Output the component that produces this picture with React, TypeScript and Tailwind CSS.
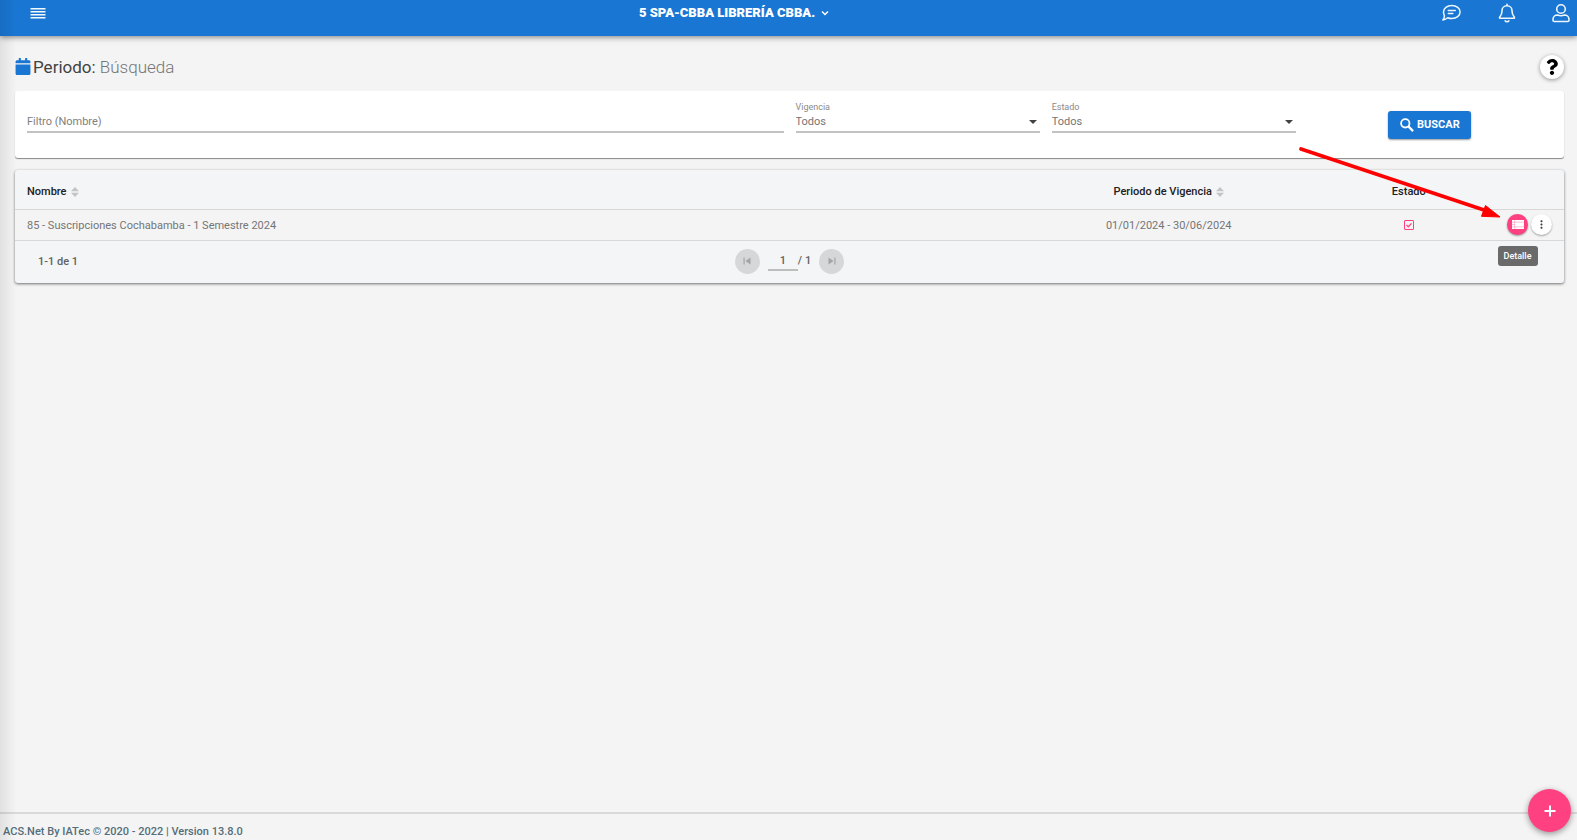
import { useState } from "react";
import { FaCalendar, FaQuestion } from "react-icons/fa";
import { MdMoreVert, MdSkipNext, MdSkipPrevious } from "react-icons/md";

interface Period {
  id: number;
  name: string;
  range: string;
  active: boolean;
}

const periods: Period[] = [
  {
    id: 85,
    name: "85 - Suscripciones Cochabamba - 1 Semestre 2024",
    range: "01/01/2024 - 30/06/2024",
    active: true,
  },
];

const SortIcon = () => (
  <svg viewBox="0 0 8 10" className="h-[10px] w-2 fill-[#c4c4c4]" aria-hidden="true">
    <path d="M4 0L8 4.3H0zM0 5.7h8L4 10z" />
  </svg>
);

const TopBar = () => (
  <header className="relative z-10 h-9 bg-[#1976d2] pr-[7px] pl-[30px] text-white shadow-[0_1px_6px_rgba(0,0,0,0.5)]">
    <div className="flex h-[26px] items-center">
      <button aria-label="Menú">
        <svg viewBox="0 0 16 12" className="h-3 w-4 fill-[#f4f9fe]">
          <path d="M0.500 1h15v1.500h-15zM0.500 4h15v1.500h-15zM0.500 7h15v1.500h-15zM0.500 10h15v1.500h-15z" />
        </svg>
      </button>
      <div className="flex flex-1 justify-center">
        <button className="flex items-center gap-1 text-[13px] font-black">
          5 SPA-CBBA LIBRERÍA CBBA.
          <svg viewBox="0 0 12 12" className="h-3 w-3 fill-none stroke-white stroke-[1.5]">
            <path d="M3 4.5l3 3 3-3" />
          </svg>
        </button>
      </div>
      <div className="flex items-center gap-9 pl-[18px]">
        <button aria-label="Mensajes">
          <svg viewBox="0 0 20 18" className="h-[18px] w-5 fill-none stroke-[#eef5fc] stroke-[1.5]" strokeLinecap="round" strokeLinejoin="round">
            <path d="M9.800 1.500c4.700 0 8.300 2.900 8.300 6.500s-3.600 6.500-8.300 6.500c-1.500 0-2.900-.3-4.100-.8C4.300 14.900 2.500 16 .8 16c.9-1 1.500-2.600 1.700-4.200C1.800 10.700 1.500 9.400 1.500 8c0-3.600 3.600-6.500 8.300-6.500z" />
            <path d="M6.300 6.500h7M6.300 9.500h4.500" />
          </svg>
        </button>
        <button aria-label="Notificaciones">
          <svg viewBox="0 0 18 20" className="h-5 w-[18px] fill-none stroke-[#eef5fc] stroke-[1.6]" strokeLinecap="round" strokeLinejoin="round">
            <path d="M9 1.300v1.500M9 2.800c-3 0-5 2.200-5 5 0 4-1.200 5-2.300 6.200-.4.500-.1 1.300.6 1.300h13.400c.7 0 1-.8.6-1.300C15.200 12.800 14 11.800 14 7.800c0-2.800-2-5-5-5z" />
            <path d="M7.200 17.800c.3.600 1 .9 1.800.9s1.500-.3 1.800-.9" />
          </svg>
        </button>
        <button aria-label="Usuario">
          <svg viewBox="0 0 18 20" className="h-5 w-[18px] fill-none stroke-[#eef5fc] stroke-[1.6]" strokeLinejoin="round">
            <circle cx="9" cy="6" r="4.300" />
            <path d="M5.500 12c1.200.5 2.300.7 3.500.7s2.300-.2 3.500-.7c2.600 0 4.500 1.900 4.500 4.400v.8c0 .8-.6 1.300-1.300 1.300H2.300c-.7 0-1.300-.5-1.300-1.300v-.8C1 13.900 2.900 12 5.500 12z" />
          </svg>
        </button>
      </div>
    </div>
  </header>
);

const SelectField = ({ id, label }: { id: string; label: string }) => (
  <div className="relative flex h-8 flex-col border-b-2 border-[#c2c2c2]">
    <label htmlFor={id} className="h-3 text-[9px] leading-3 text-[#8a8a8a]">
      {label}
    </label>
    <select id={id} className="h-[18px] w-full appearance-none text-[11px] leading-[14px] text-[#757575] outline-none">
      <option>Todos</option>
      <option>Activo</option>
      <option>Inactivo</option>
    </select>
    <svg viewBox="0 0 8 4" className="pointer-events-none absolute right-[3px] bottom-[7px] h-1 w-2 fill-[#424242]" aria-hidden="true">
      <path d="M0 0h8L4 4z" />
    </svg>
  </div>
);

const Filters = () => {
  const [filter, setFilter] = useState("");

  return (
    <form
      onSubmit={(e) => e.preventDefault()}
      className="grid h-[67px] grid-cols-6 items-start gap-3 rounded-[3px] bg-white px-3 pt-[10px] shadow-[0_1px_1px_rgba(0,0,0,0.45)]"
    >
      <div className="col-span-3 flex h-8 flex-col justify-end border-b-2 border-[#c2c2c2]">
        <input
          aria-label="Filtro (Nombre)"
          placeholder="Filtro (Nombre)"
          value={filter}
          onChange={(e) => setFilter(e.target.value)}
          className="h-[18px] w-full pb-[2px] text-[11px] leading-[14px] outline-none placeholder:text-[#808080]"
        />
      </div>
      <SelectField id="vigencia" label="Vigencia" />
      <SelectField id="estado" label="Estado" />
      <button className="mt-[10px] flex h-7 w-[83px] items-center justify-center gap-[3px] justify-self-center rounded-[3px] bg-[#1976d2] text-[11px] font-bold text-white shadow-[0_1px_2px_rgba(0,0,0,0.4)]">
        <svg viewBox="0 0 14 14" className="h-[14px] w-[14px] fill-none stroke-white stroke-[1.8]" aria-hidden="true">
          <circle cx="5.300" cy="5.300" r="4.200" />
          <path d="M8.400 8.400l4.700 4.700" strokeWidth="2.200" />
        </svg>
        BUSCAR
      </button>
    </form>
  );
};

const PeriodTable = () => (
  <section className="relative rounded-[3px] bg-[#f4f5f7] text-[11px] shadow-[0_1px_3px_rgba(0,0,0,0.55)]">
    <table className="w-full table-fixed border-collapse">
      <thead className="text-[#212121]">
        <tr className="h-[39px] border-b border-[#d8d8d8]">
          <th className="pt-[6px] pr-3 pl-3 text-left font-medium">
            <button className="flex items-center gap-1">
              Nombre <SortIcon />
            </button>
          </th>
          <th className="w-[20%] pt-[6px] font-medium">
            <button className="inline-flex items-center gap-1">
              Periodo de Vigencia <SortIcon />
            </button>
          </th>
          <th className="w-[11%] pt-[6px] font-medium">Estado</th>
          <th className="w-[70px]" aria-label="Acciones"></th>
        </tr>
      </thead>
      <tbody className="text-[#757575]">
        {periods.map((period) => (
          <tr key={period.id} className="h-[31px] border-b border-[#d8d8d8] bg-[#f4f4f4]">
            <td className="pt-[3px] pl-3">{period.name}</td>
            <td className="pt-[3px] text-center">{period.range}</td>
            <td>
              {period.active && (
                <svg viewBox="0 0 10 10" className="mx-auto h-[10px] w-[10px] fill-none stroke-[#ff4081]" role="img" aria-label="Activo">
                  <rect x="0.5" y="0.5" width="9" height="9" rx="0.5" />
                  <path d="M2.500 4.900l1.800 1.800 3.200-3.300" strokeWidth="1.300" />
                </svg>
              )}
            </td>
            <td className="pr-3">
              <div className="flex items-center justify-end gap-[3px]">
                <div className="relative">
                  <button
                    aria-label="Detalle"
                    className="flex h-[21px] w-[21px] items-center justify-center rounded-full bg-[#ff4081] shadow-[0_1px_2px_rgba(0,0,0,0.4)]"
                  >
                    <svg viewBox="0 0 12 9" className="h-[9px] w-3">
                      <path d="M0 0h12v9H0z" fill="#fff" />
                      <path d="M2.700 0v9M0 2.200h12M0 4.500h2.700M0 6.800h12" stroke="#ff80ab" strokeWidth="0.5" />
                    </svg>
                  </button>
                  <span
                    role="tooltip"
                    className="absolute top-8 left-1/2 h-5 w-10 -translate-x-1/2 rounded-[3px] bg-[#6a6a6a] text-center text-[9px] leading-5 font-medium text-white"
                  >
                    Detalle
                  </span>
                </div>
                <button
                  aria-label="Más opciones"
                  className="flex h-[21px] w-[21px] items-center justify-center rounded-full bg-white text-[#424242] shadow-[0_1px_2px_rgba(0,0,0,0.35)]"
                >
                  <MdMoreVert className="h-[13px] w-[13px]" />
                </button>
              </div>
            </td>
          </tr>
        ))}
      </tbody>
    </table>

    <div className="grid h-[42px] grid-cols-[1fr_auto_1fr] items-center pb-px font-medium text-[#616161]">
      <span className="pt-[2px] pl-[23px]">1-1 de 1</span>
      <div className="flex items-center gap-2">
        <button aria-label="Página anterior" className="flex h-[25px] w-[25px] items-center justify-center rounded-full bg-[#d6d7d8] text-[#a3a4a5]">
          <MdSkipPrevious className="h-[14px] w-[14px]" />
        </button>
        <div className="flex items-center">
          <input
            aria-label="Página"
            defaultValue="1"
            className="h-5 w-[30px] border-b-2 border-[#bdbdbd] text-center outline-none"
          />
          <span>/ 1</span>
        </div>
        <button aria-label="Página siguiente" className="flex h-[25px] w-[25px] items-center justify-center rounded-full bg-[#d6d7d8] text-[#a3a4a5]">
          <MdSkipNext className="h-[14px] w-[14px]" />
        </button>
      </div>
    </div>

    {/* arrow pointing at the row's detail button */}
    <svg viewBox="0 0 204 74" className="pointer-events-none absolute -top-6 right-[62px] h-[74px] w-[204px]" aria-hidden="true">
      <path d="M3 3L186 64" fill="none" stroke="#f00" strokeWidth="3.800" strokeLinecap="round" />
      <path d="M187.500 59.500L202 71l-18.500-.7z" fill="#f00" stroke="#f00" />
    </svg>
  </section>
);

const App = () => {
  return (
    <div className="relative flex min-h-screen flex-col bg-[#f4f4f4] font-['Roboto',sans-serif]">
      <TopBar />

      <main className="flex-1 pt-[18px] pr-[13px] pl-[15px]">
        <div className="flex h-[25px] items-center justify-between">
          <h1 className="flex items-center gap-[2px] text-[17px] text-[#424242]">
            <FaCalendar className="h-[17px] w-4 text-[#1976d2]" />
            <span className="pt-[2px]">
              Periodo: <span className="font-light text-[#757575]">Búsqueda</span>
            </span>
          </h1>
          <button
            aria-label="Ayuda"
            className="flex h-6 w-6 items-center justify-center rounded-full bg-white text-black shadow-[0_1px_4px_rgba(0,0,0,0.4)]"
          >
            <FaQuestion className="h-4 w-4" />
          </button>
        </div>

        <div className="mt-3 flex flex-col gap-3">
          <Filters />
          <PeriodTable />
        </div>
      </main>

      <footer className="h-7 border-t-2 border-[#d9d9d9] pt-[11px] pl-[3px] text-[11px] leading-[14px] font-medium text-[#546e7a]">
        ACS.Net By IATec © 2020 - 2022 | Version 13.8.0
      </footer>

      <button
        aria-label="Agregar"
        className="fixed right-[6px] bottom-2 z-20 flex h-[43px] w-[43px] items-center justify-center rounded-full bg-[#ff4081] shadow-[0_2px_6px_rgba(0,0,0,0.4)]"
      >
        <svg viewBox="0 0 12 12" className="h-3 w-3 stroke-white stroke-2">
          <path d="M6 0.500v11M0.500 6h11" />
        </svg>
      </button>

      {/* shadow of the closed side menu */}
      <div className="pointer-events-none absolute inset-y-0 left-0 z-20 w-4 bg-linear-to-r from-black/8 to-transparent" />
    </div>
  );
};

export default App;
